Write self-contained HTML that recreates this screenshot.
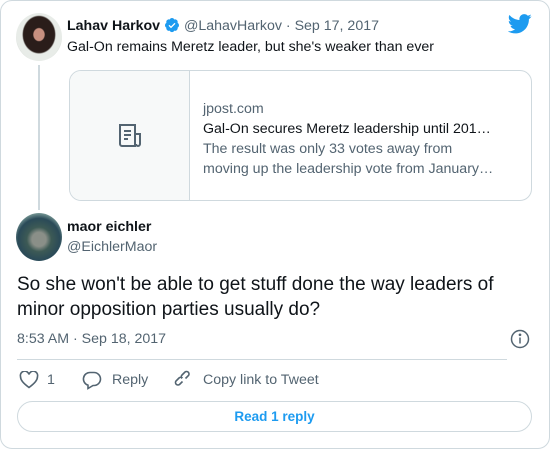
<!DOCTYPE html>
<html><head><style>
*{margin:0;padding:0;box-sizing:border-box}
body{width:550px;height:449px;background:#fff;font-family:"Liberation Sans",sans-serif;position:relative;overflow:hidden}
.card{position:absolute;left:0;top:0;width:550px;height:449px;border:1px solid #cfd9de;border-radius:12px}
.abs{position:absolute;white-space:nowrap}
.av{position:absolute;border-radius:50%;overflow:hidden}
</style></head><body>
<div class="card"></div>
<div class="av" style="left:16px;top:13px;width:46px;height:48px;background:radial-gradient(ellipse at 50% 45%,#c89080 0 16%,#2a1d1a 19% 48%,#e8ece8 52% 70%,#a8b0a8 80%)"></div>
<div class="abs" style="left:38px;top:65px;width:2px;height:145px;background:#cfd9de"></div>
<div class="abs" style="left:67px;top:17px;font-size:14.2px;color:#0f1419"><b>Lahav Harkov</b>
<svg width="16" height="16" viewBox="0 0 24 24" style="vertical-align:-3px"><path fill="#1d9bf0" d="M22.5 12.5c0-1.58-.88-2.950-2.16-3.6.15-.44.23-.92.23-1.4 0-2.21-1.71-4-3.82-4-.47 0-.92.08-1.34.25C14.82 2.42 13.5 1.5 12 1.5s-2.82.92-3.41 2.25c-.42-.17-.87-.25-1.34-.25-2.11 0-3.82 1.79-3.82 4 0 .48.08.96.23 1.4-1.28.65-2.160 2.02-2.16 3.6 0 1.5.8 2.8 1.96 3.5-.04.25-.06.5-.06.75 0 2.21 1.71 4 3.82 4 .47 0 .92-.09 1.34-.25.6 1.33 1.9 2.25 3.41 2.25s2.82-.92 3.41-2.25c.42.16.87.25 1.34.25 2.11 0 3.82-1.79 3.82-4 0-.25-.02-.5-.06-.75 1.16-.7 1.96-2 1.96-3.5z"/><path d="M7.5 12.5l3 3 6-6" stroke="#fff" stroke-width="2" fill="none"/></svg>
<span style="color:#536471">@LahavHarkov · Sep 17, 2017</span></div>
<svg class="abs" style="left:508px;top:14px" width="24" height="20" viewBox="0 0 24 20"><path fill="#1d9bf0" d="M23.6 2.4c-.9.4-1.8.6-2.8.8 1-.6 1.8-1.5 2.1-2.7-.9.6-2 1-3.1 1.2C18.9.7 17.6.1 16.2.1c-2.7 0-4.8 2.2-4.8 4.8 0 .4 0 .8.1 1.1C7.4 5.8 3.8 3.9 1.5 1 1 1.7.8 2.6.8 3.5c0 1.7.9 3.2 2.2 4-.8 0-1.5-.2-2.2-.6v.1c0 2.3 1.7 4.3 3.9 4.7-.4.1-.8.2-1.300.2-.3 0-.6 0-.9-.1.6 1.900 2.4 3.3 4.5 3.4-1.7 1.3-3.7 2.1-6 2.1-.4 0-.8 0-1.2-.1 2.1 1.4 4.7 2.2 7.4 2.2 8.9 0 13.7-7.4 13.7-13.7v-.6c1-.7 1.8-1.6 2.5-2.5z"/></svg>
<div class="abs" style="left:67px;top:39px;font-size:14.2px;color:#0f1419">Gal-On remains Meretz leader, but she's weaker than ever</div>
<div class="abs" style="left:69px;top:70px;width:463px;height:131px;border:1px solid #cfd9de;border-radius:12px;overflow:hidden">
 <div style="position:absolute;left:0;top:0;width:120px;height:100%;background:#f7f9f9;border-right:1px solid #cfd9de"></div>
 <svg style="position:absolute;left:47px;top:51px" width="28" height="28" viewBox="0 0 28 28" fill="none" stroke="#536471" stroke-width="2"><path d="M3 3h15v21H5a2 2 0 0 1-2-2z M18 12h5v10a2 2 0 0 1-4 0 M7 9h7 M7 13h7 M7 17h4"/></svg>
 <div style="position:absolute;left:133px;top:28px;font-size:14.2px;line-height:20px;color:#536471">jpost.com</div>
 <div style="position:absolute;left:133px;top:48px;font-size:14.2px;line-height:20px;color:#0f1419">Gal-On secures Meretz leadership until 201…</div>
 <div style="position:absolute;left:133px;top:68px;font-size:14.2px;line-height:20px;color:#536471">The result was only 33 votes away from<br>moving up the leadership vote from January…</div>
</div>
<div class="av" style="left:16px;top:213px;width:46px;height:48px;background:radial-gradient(circle at 50% 55%,#8a8f88 0 20%,#3d5a55 35%,#2a4a58 60%,#8fb0a8 80%)"></div>
<div class="abs" style="left:67px;top:219px;font-size:14.2px;color:#0f1419;font-weight:bold">maor eichler</div>
<div class="abs" style="left:67px;top:239px;font-size:14.2px;color:#536471">@EichlerMaor</div>
<div class="abs" style="left:17px;top:272px;font-size:19px;line-height:25px;color:#0f1419">So she won't be able to get stuff done the way leaders of<br>minor opposition parties usually do?</div>
<div class="abs" style="left:17px;top:331px;font-size:14.2px;color:#536471">8:53 AM · Sep 18, 2017</div>
<svg class="abs" style="left:510px;top:329px" width="20" height="20" viewBox="0 0 20 20" fill="none" stroke="#536471" stroke-width="1.5"><circle cx="10" cy="10" r="8.5"/><path d="M10 8.5v6"/><circle cx="10" cy="5.8" r=".6" fill="#536471"/></svg>
<div class="abs" style="left:17px;top:359px;width:490px;height:1px;background:#cfd9de"></div>
<svg class="abs" style="left:19px;top:371px" width="20" height="18" viewBox="0 0 20 18" fill="none" stroke="#536471" stroke-width="1.6"><path d="M10 16.5C4 12 1.5 9 1.5 5.5A4 4 0 0 1 10 3.5a4 4 0 0 1 8.5 2c0 3.5-2.5 6.5-8.5 11z"/></svg>
<div class="abs" style="left:47px;top:372px;font-size:14.2px;color:#536471">1</div>
<svg class="abs" style="left:82px;top:370px" width="20" height="20" viewBox="0 0 20 20" fill="none" stroke="#536471" stroke-width="1.6"><path d="M8 2.5h4a6.5 6.5 0 0 1 0 13h-1l-5 3v-3.3A6.5 6.5 0 0 1 8 2.5z"/></svg>
<div class="abs" style="left:112px;top:372px;font-size:14.2px;color:#536471">Reply</div>
<svg class="abs" style="left:174px;top:370px" width="20" height="20" viewBox="0 0 20 20" fill="none" stroke="#536471" stroke-width="1.6"><path d="M8.5 11.5l-3 3a2.5 2.5 0 0 1-3.5-3.5l3-3a2.5 2.5 0 0 1 3.5 0 M11.5 8.5l3-3a2.5 2.5 0 0 0-3.5-3.5l-3 3a2.5 2.5 0 0 0 0 3.5"/></svg>
<div class="abs" style="left:203px;top:372px;font-size:14.2px;color:#536471">Copy link to Tweet</div>
<div class="abs" style="left:17px;top:401px;width:515px;height:31px;border:1px solid #cfd9de;border-radius:16px;text-align:center;font-size:13.5px;line-height:29px;font-weight:bold;color:#1d9bf0">Read 1 reply</div>
</body></html>
